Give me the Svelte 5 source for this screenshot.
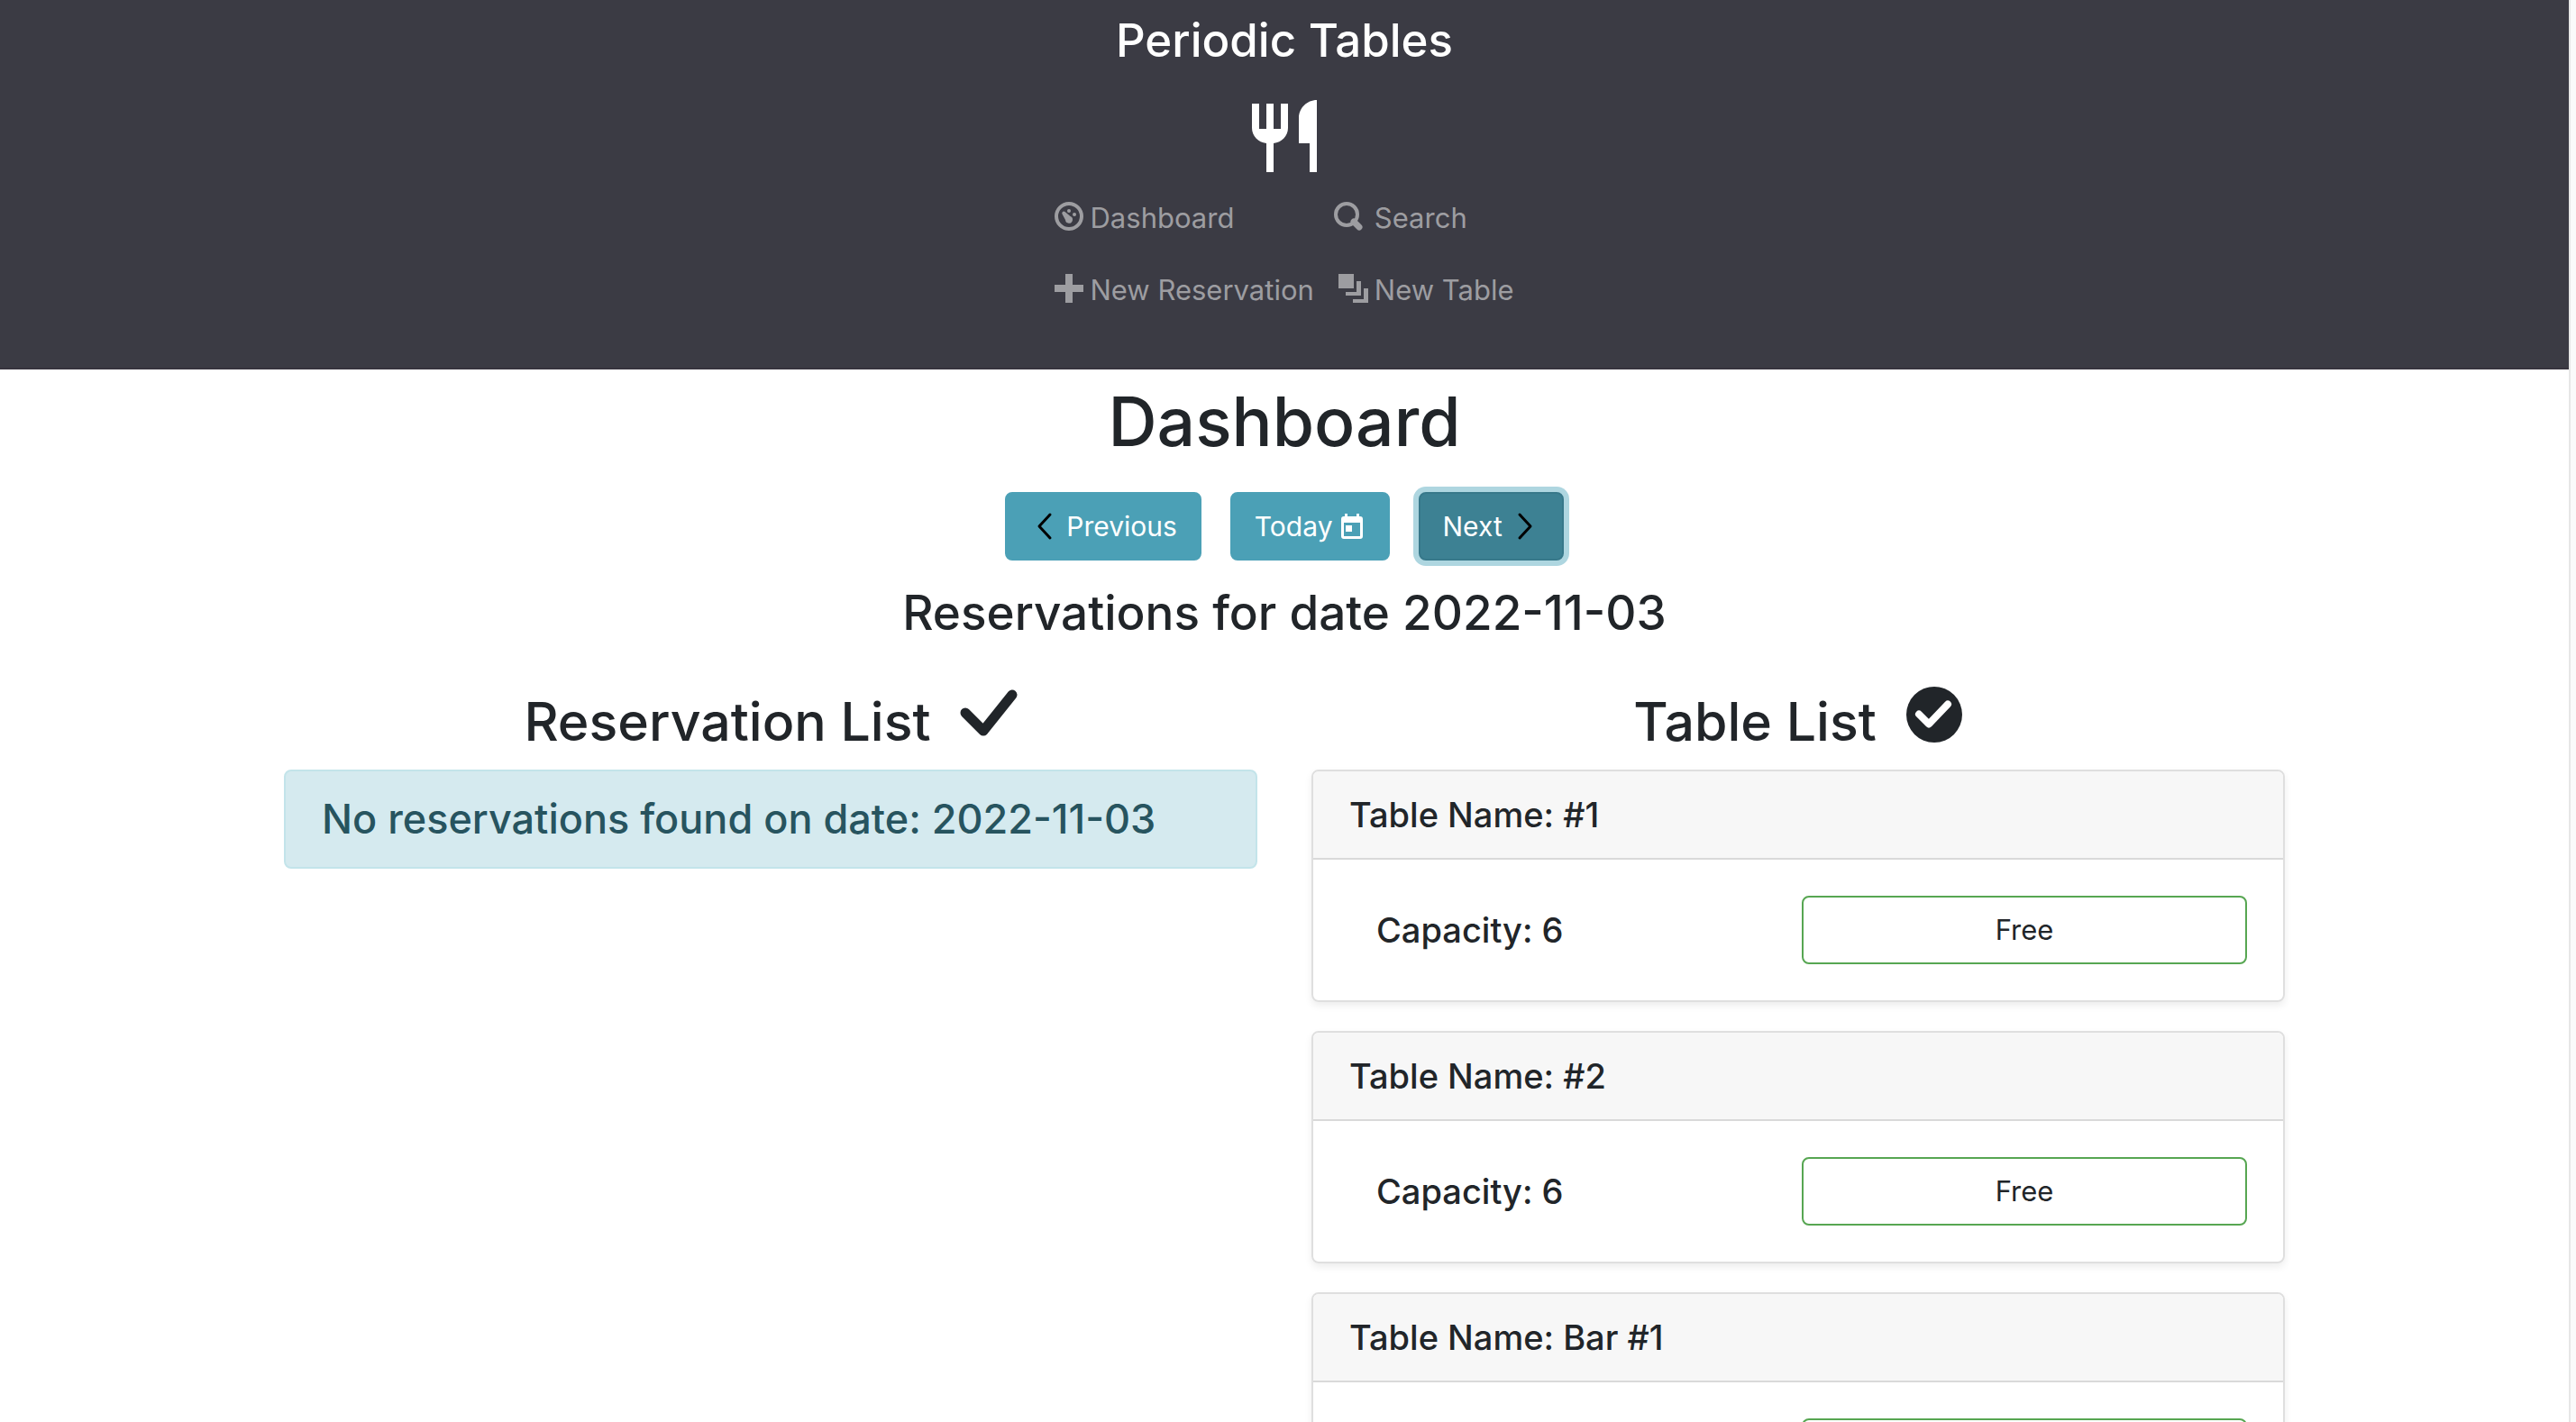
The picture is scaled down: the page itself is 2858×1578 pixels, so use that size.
<script lang="ts">
  const date = '2022-11-03';
  const tables = [
    { name: '#1', capacity: 6 },
    { name: '#2', capacity: 6 },
    { name: 'Bar #1', capacity: 1 },
  ];
</script>

<div class="app">
  <div class="page">
    <header>
      <h3 class="brand">Periodic Tables</h3>
      <svg class="logo" viewBox="0 0 72 80" aria-hidden="true">
        <path d="M0 4h8v28h8V4h8v28h8V4h8v27c0 9-7 16-16 17v32h-8V48C7 47 0 40 0 31zM72 0v80h-8V48H52V20C52 9 61 0 72 0z" />
      </svg>
      <nav>
        <a href="#dashboard">
          <svg class="icon" viewBox="0 0 32 32" aria-hidden="true">
            <circle cx="16" cy="16" r="14" fill="none" stroke="currentColor" stroke-width="4" />
            <circle cx="16" cy="10" r="2" />
            <circle cx="22" cy="14" r="2" />
            <path d="M8.500 13.500a2 2 0 0 1 3-2.500l6 5a4 4 0 1 1-5.500 4z" />
          </svg>
          Dashboard
        </a>
        <a href="#search">
          <svg class="icon wide" viewBox="0 0 38 32" aria-hidden="true">
            <circle cx="14" cy="14" r="12" fill="none" stroke="currentColor" stroke-width="4" />
            <path d="M22 22l6 6" fill="none" stroke="currentColor" stroke-width="7" stroke-linecap="round" />
          </svg>
          Search
        </a>
        <a href="#new-reservation">
          <svg class="icon" viewBox="0 0 32 32" aria-hidden="true">
            <path d="M12 0h8v12h12v8H20v12h-8V20H0v-8h12z" />
          </svg>
          New Reservation
        </a>
        <a href="#new-table">
          <svg class="icon wide" viewBox="0 0 38 32" aria-hidden="true">
            <path d="M5 0h17v16H5zM25 8h5v16H13v-4h12zM33 16h5v16H21v-4h12z" />
          </svg>
          New Table
        </a>
      </nav>
    </header>

    <main>
      <h1>Dashboard</h1>
      <div class="days">
        <button type="button" class="day">
          <svg class="chevron" viewBox="0 0 32 32" aria-hidden="true"><path d="M23 3L11 16l12 13" /></svg>
          Previous
        </button>
        <button type="button" class="day">
          Today
          <svg class="calendar" viewBox="0 0 24 28" aria-hidden="true">
            <path fill-rule="evenodd" d="M4 0h3v3h10V0h3v3h1a3 3 0 0 1 3 3v19a3 3 0 0 1-3 3H3a3 3 0 0 1-3-3V6a3 3 0 0 1 3-3h1zM3 10v15h18V10zM5 13h7v7H5z" />
          </svg>
        </button>
        <button type="button" class="day focused">
          Next
          <svg class="chevron" viewBox="0 0 32 32" aria-hidden="true"><path d="M10 3l12 13-12 13" /></svg>
        </button>
      </div>
      <h3 class="subtitle">Reservations for date {date}</h3>

      <div class="columns">
        <section>
          <h2>
            Reservation List
            <svg class="mark" viewBox="0 0 64 64" aria-hidden="true">
              <path d="M6 31l20 20L58 11" fill="none" stroke="currentColor" stroke-width="11" stroke-linecap="round" stroke-linejoin="round" />
            </svg>
          </h2>
          <div class="alert" role="alert"><h4>No reservations found on date: {date}</h4></div>
        </section>
        <section>
          <h2>
            Table List
            <svg class="mark" viewBox="0 0 64 64" aria-hidden="true">
              <circle cx="32" cy="33" r="31" />
              <path d="M15 32.500l11 11 21-22" fill="none" stroke="#fff" stroke-width="8" stroke-linecap="round" stroke-linejoin="round" />
            </svg>
          </h2>
          {#each tables as table}
            <article class="card">
              <h5 class="card-header">Table Name: {table.name}</h5>
              <div class="card-body">
                <h5>Capacity: {table.capacity}</h5>
                <button type="button" class="free">Free</button>
              </div>
            </article>
          {/each}
        </section>
      </div>
    </main>
  </div>
  <div class="track" aria-hidden="true"></div>
</div>

<style>
  :global(body) {
    margin: 0;
    background: #fff;
  }
  .app {
    display: flex;
    height: 100vh;
    overflow: hidden;
    font-family: Inter, 'Liberation Sans', sans-serif;
    font-size: 31px;
    line-height: 48px;
    color: #212529;
  }
  .page {
    flex: 1;
    min-width: 0;
    overflow: hidden;
  }
  .track {
    box-sizing: border-box;
    width: 8px;
    background: #fafafa;
    border-left: 2px solid #e6e6e6;
  }
  h1, h2, h3, h4, h5 {
    margin: 0;
    font-weight: 500;
  }
  svg {
    fill: currentColor;
    flex: none;
  }
  header {
    display: flex;
    flex-direction: column;
    align-items: center;
    padding: 11px 0 55px;
    background: #3b3b44;
    border-bottom: 2px solid #37343f;
    color: #fff;
  }
  .brand, .subtitle {
    font-size: 53px;
    line-height: 68px;
  }
  .brand {
    font-size: 51px;
  }
  .logo {
    width: 72px;
    height: 80px;
    margin: 32px 0 18px;
  }
  nav {
    display: grid;
    grid-template-columns: auto auto;
    column-gap: 22px;
    row-gap: 16px;
  }
  nav a {
    display: flex;
    align-items: center;
    gap: 7px;
    height: 64px;
    padding-top: 1px;
    box-sizing: border-box;
    color: #9d9da1;
    text-decoration: none;
  }
  .icon {
    width: 32px;
    height: 32px;
    margin-bottom: 4px;
  }
  .icon.wide {
    width: 38px;
  }
  main {
    max-width: 2280px;
    margin: 0 auto;
  }
  h1 {
    padding-top: 10px;
    font-size: 75px;
    line-height: 96px;
    text-align: center;
  }
  .days {
    display: flex;
    justify-content: center;
    gap: 32px;
    padding-top: 30px;
  }
  button {
    box-sizing: border-box;
    height: 76px;
    border-radius: 8px;
    font: inherit;
    cursor: pointer;
  }
  .day {
    display: flex;
    align-items: center;
    gap: 9px;
    padding: 0 25px;
    border: 2px solid #4ba0b6;
    background: #4ba0b6;
    color: #fff;
    font-size: 30px;
  }
  .day.focused {
    background: #3d8193;
    border-color: #37788a;
    box-shadow: 0 0 0 6px #aed6e0;
  }
  .chevron {
    width: 32px;
    height: 32px;
    fill: none;
    stroke: #000;
    stroke-width: 3;
    stroke-linecap: round;
    stroke-linejoin: round;
  }
  .calendar {
    width: 24px;
    height: 28px;
    margin-right: 3px;
  }
  .subtitle {
    padding-top: 24px;
    text-align: center;
  }
  .columns {
    display: grid;
    grid-template-columns: 1fr 1fr;
    gap: 60px;
    padding: 42px 30px 0;
  }
  h2 {
    display: flex;
    justify-content: center;
    align-items: center;
    gap: 32px;
    padding-top: 4px;
    margin-bottom: 12px;
    font-size: 59px;
    line-height: 82px;
  }
  .mark {
    width: 64px;
    height: 64px;
    margin-bottom: 18px;
  }
  .alert {
    padding: 24px 40px;
    border: 2px solid #c3e4ea;
    border-radius: 8px;
    background: #d5eaef;
    color: #27545f;
  }
  h4 {
    font-size: 45px;
    line-height: 58px;
  }
  .card {
    margin-bottom: 32px;
    border: 2px solid #dfdfdf;
    border-radius: 8px;
    box-shadow: 0 4px 8px rgba(0, 0, 0, 0.075);
  }
  h5 {
    font-size: 38px;
    line-height: 48px;
  }
  .card-header {
    padding: 24px 40px;
    border-bottom: 2px solid #d9d9d9;
    border-radius: 6px 6px 0 0;
    background: #f7f7f7;
  }
  .card-body {
    display: grid;
    grid-template-columns: 1fr 494px;
    align-items: center;
    padding: 40px 40px 40px 70px;
  }
  .free {
    border: 2px solid #57a652;
    background: #fff;
    color: #212529;
  }
</style>
